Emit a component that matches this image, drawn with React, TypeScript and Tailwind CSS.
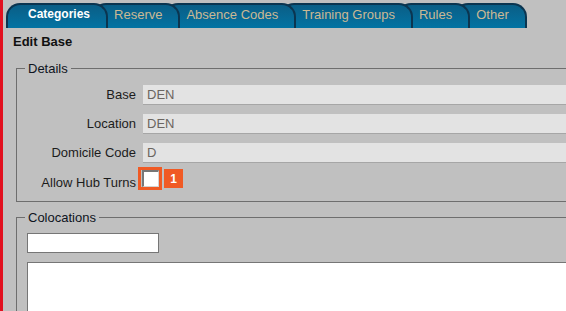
import React from "react";

const tabs = [
  { label: "Categories", active: true, z: "z-[6]" },
  { label: "Reserve", active: false, z: "z-[5]" },
  { label: "Absence Codes", active: false, z: "z-[4]" },
  { label: "Training Groups", active: false, z: "z-[3]" },
  { label: "Rules", active: false, z: "z-[2]" },
  { label: "Other", active: false, z: "z-[1]" },
];

function ReadOnlyRow({ label, value, first }: { label: string; value: string; first?: boolean }) {
  return (
    <div className={`flex items-center ${first ? "" : "mt-[9px]"}`}>
      <div className="w-[119px] shrink-0 text-right text-[#1c1c1c]">{label}</div>
      <input
        readOnly
        defaultValue={value}
        className="ml-[7px] h-[20px] w-[600px] shrink-0 border-0 border-b border-[#a6a6a6] bg-[#e3e3e3] pl-[4px] text-[13px] text-[#6b6560] outline-none font-['Liberation_Sans',Arial,sans-serif]"
      />
    </div>
  );
}

export default function App() {
  return (
    <div className="flex h-[311px] w-[566px] overflow-hidden bg-[#c0c0c0] font-['Liberation_Sans',Arial,sans-serif] text-[13px] text-[#1a1a1a]">
      <div className="w-[3px] shrink-0 bg-[#e2101f]" />
      <div className="min-w-0 flex-1">
        <div className="flex pl-[3px] pt-[3px]">
          {tabs.map((t, i) => (
            <div
              key={t.label}
              className={`relative ${t.z} ${i === 0 ? "" : "ml-[-16px]"} h-[25px] shrink-0 whitespace-nowrap rounded-t-[14px] border-2 border-b-0 border-[#0b3550] bg-linear-to-b from-[#0a5e86] to-[#0273a3] pl-[20px] pr-[16px] leading-[19px] ${
                t.active ? "text-[12px] font-bold text-white" : "text-[13px] text-[#cbb994]"
              }`}
            >
              {t.label}
            </div>
          ))}
        </div>

        <div className="mt-[6px] pl-[10px] text-[13px] font-bold leading-[16px] text-[#111]">Edit Base</div>

        <fieldset className="ml-[13px] mt-[11px] w-[620px] border border-[#6e6e6e] pb-[11px]">
          <legend className="ml-[8px] px-[3px] leading-[15px] text-[#0e1420]">Details</legend>
          <div className="pt-[9px]">
            <ReadOnlyRow label="Base" value="DEN" first />
            <ReadOnlyRow label="Location" value="DEN" />
            <ReadOnlyRow label="Domicile Code" value="D" />
            <div className="mt-[4px] flex items-end">
              <div className="w-[119px] shrink-0 text-right leading-[15px] text-[#1c1c1c]">Allow Hub Turns</div>
              <div className="ml-[2px] flex items-center">
                <div className="flex h-[23px] w-[24px] items-center justify-center border-[3px] border-[#f05a24]">
                  <div className="h-[17px] w-[17px] border-l-2 border-t-2 border-r border-b border-l-[#777] border-t-[#777] border-r-[#d4d4d4] border-b-[#d4d4d4] bg-white" />
                </div>
                <div className="ml-[2px] flex h-[19px] w-[19px] items-center justify-center bg-[#f05a24] text-[12px] font-bold text-white">
                  1
                </div>
              </div>
            </div>
          </div>
        </fieldset>

        <fieldset className="ml-[13px] mt-[8px] w-[620px] border border-[#6e6e6e]">
          <legend className="ml-[8px] px-[3px] leading-[15px] text-[#0e1420]">Colocations</legend>
          <div className="pl-[10px] pt-[8px]">
            <input className="block h-[20px] w-[132px] border border-[#767676] bg-white outline-none" />
            <textarea className="mt-[9px] block h-[120px] w-[600px] resize-none border border-[#767676] bg-white outline-none" />
          </div>
        </fieldset>
      </div>
    </div>
  );
}
